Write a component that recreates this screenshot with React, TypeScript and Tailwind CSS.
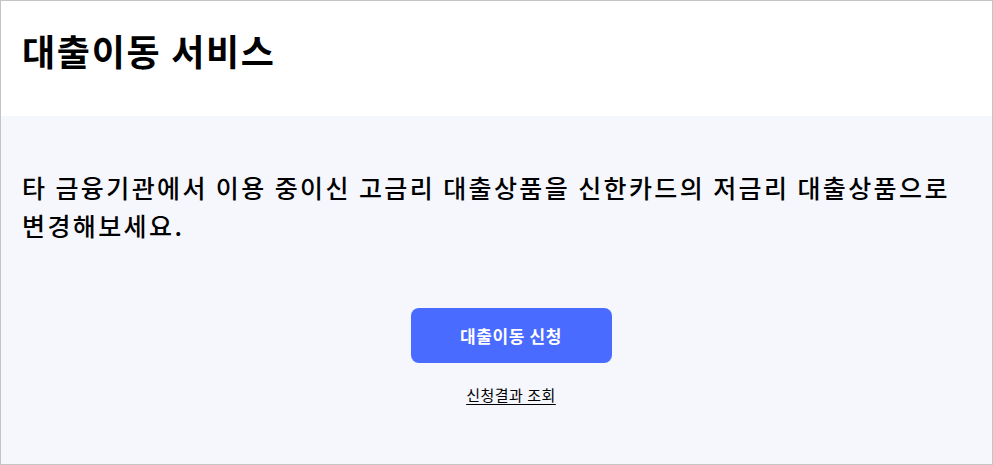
export default function App() {
  return (
    <div className="w-[993px] h-[465px] border border-[#c4c4c4] bg-[#f5f7fc] flex flex-col font-['Noto_Sans_CJK_KR','Noto_Sans',sans-serif] text-black overflow-hidden">
      {/* Header */}
      <header className="h-[115px] bg-white px-[21px] pt-[24px] shrink-0">
        <h1 className="text-[36px] leading-[50px] font-bold tracking-[1.7px]">대출이동 서비스</h1>
      </header>

      {/* Body */}
      <main className="flex-1 px-[21px] pt-[52px]">
        <p className="text-[25px] leading-[38px] font-medium tracking-[2.4px] break-keep">
          타 금융기관에서 이용 중이신 고금리 대출상품을 신한카드의 저금리 대출상품으로 변경해보세요.
        </p>

        <div className="flex flex-col items-center mt-[64px] pl-[29px]">
          <button className="w-[201px] h-[55px] rounded-[8px] bg-[#4a6bff] text-white text-[17px] font-bold tracking-[0.6px]">
            대출이동 신청
          </button>
          <a href="#" className="mt-[22px] text-[15px] leading-[20px] tracking-[0.5px] underline underline-offset-[3px]">
            신청결과 조회
          </a>
        </div>
      </main>
    </div>
  );
}
